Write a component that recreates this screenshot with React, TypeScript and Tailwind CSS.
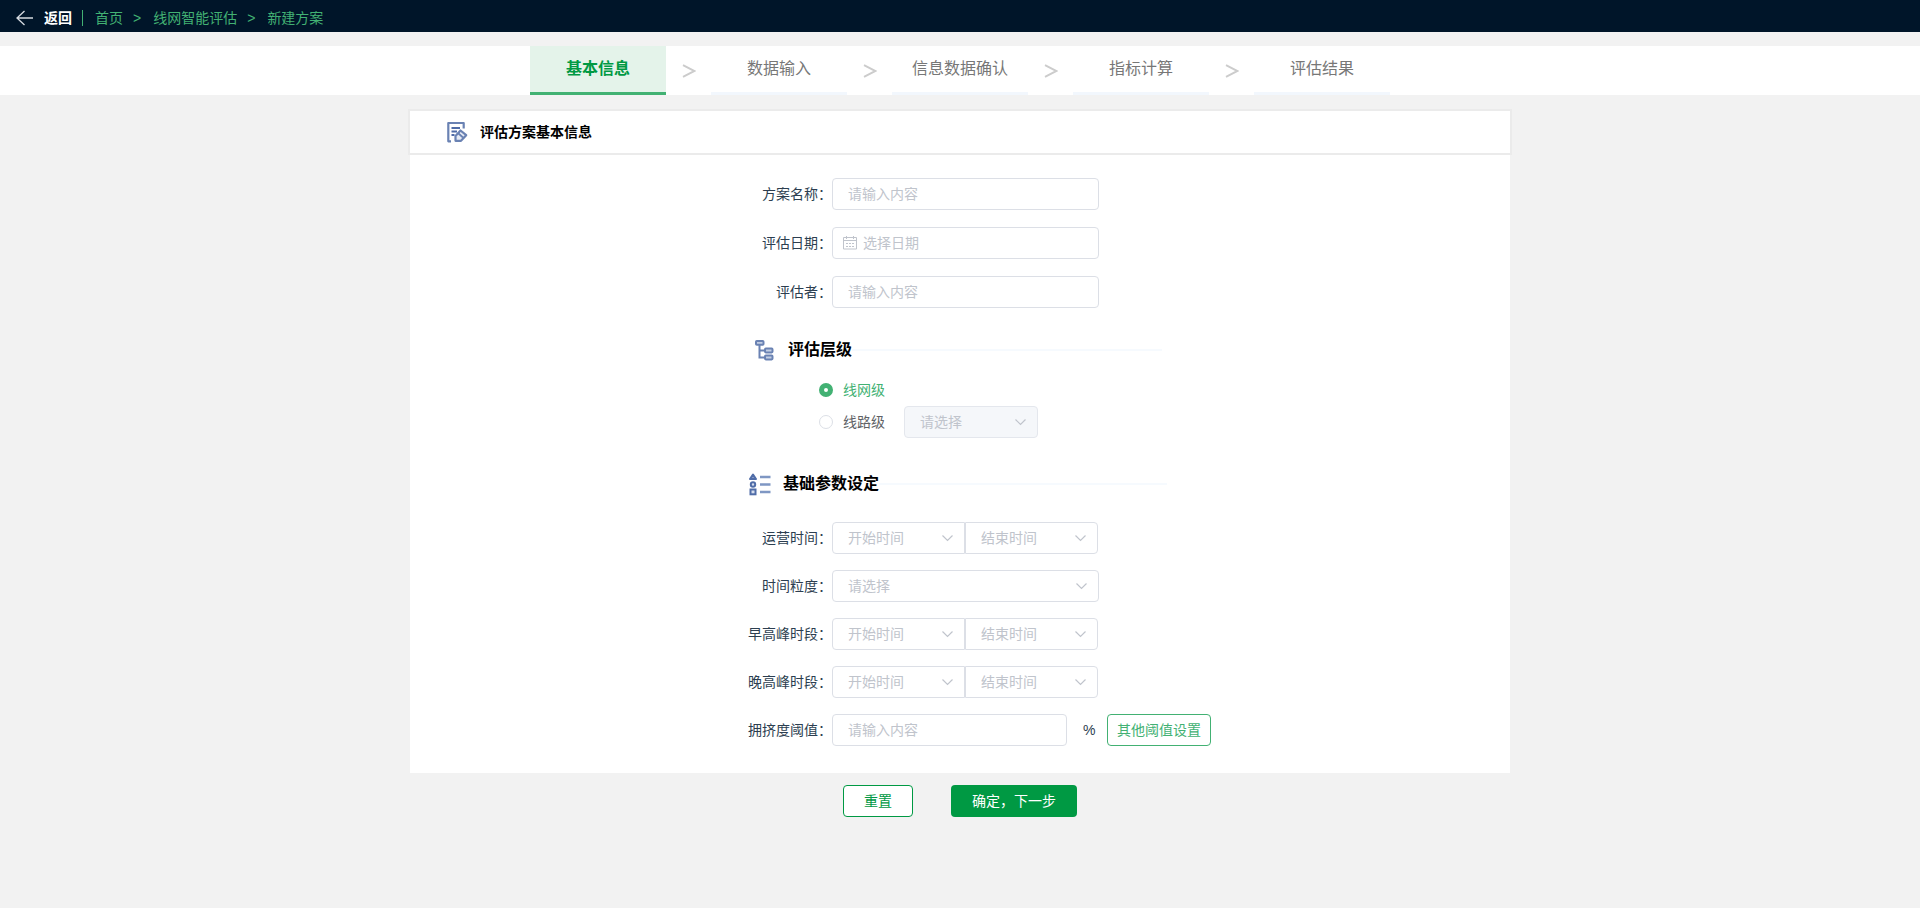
import { useState } from 'react';
import type { ReactNode } from 'react';

const STEPS = ['基本信息', '数据输入', '信息数据确认', '指标计算', '评估结果'];

const FIELD =
  'h-8 rounded border border-[#dcdfe6] bg-white text-sm text-[#606266] outline-none placeholder:text-[#c0c4cc] focus:border-[#42b173]';

function BackArrow() {
  return (
    <svg width="18" height="16" viewBox="0 0 18 16" fill="none" stroke="#d5dae0" strokeWidth="1.3" aria-hidden="true">
      <path d="M17 8H1M8.500 1L1 8l7.500 7" />
    </svg>
  );
}

function StepArrow() {
  return (
    <svg width="14" height="14" viewBox="0 0 14 14" fill="none" stroke="#cccccc" strokeWidth="2" aria-hidden="true">
      <path d="M1 1.200l11.500 5.800L1 12.800" />
    </svg>
  );
}

function EditFormIcon() {
  return (
    <svg width="22" height="22" viewBox="0 0 22 22" fill="none" stroke="#6a82b3" strokeWidth="2.200" aria-hidden="true">
      <path d="M5 20.300H2.300V2H17.700V7.500" strokeLinejoin="round" />
      <path d="M5.500 7H14M5.500 10.500H11M5.500 14H8.500" stroke="#4f6ba6" strokeWidth="2" />
      <path d="M14.500 9.500l5.700 4.700-5.200 5.600H9.500V15z" fill="#e6ebf5" strokeLinejoin="round" />
      <path d="M12.500 12.500l4.500 4" strokeWidth="1.800" />
    </svg>
  );
}

function TreeIcon() {
  return (
    <svg width="20" height="22" viewBox="0 0 20 22" fill="none" stroke="#6a82b3" strokeWidth="2" aria-hidden="true">
      <path d="M5.500 6v12.500h5.500M5.500 11.500h5.500" />
      <rect x="2" y="2" width="7.500" height="3.800" rx="0.800" fill="#c3cee3" />
      <rect x="11" y="9.600" width="7.500" height="3.800" rx="0.800" fill="#c3cee3" />
      <rect x="11" y="16.600" width="7.500" height="3.800" rx="0.800" fill="#c3cee3" />
    </svg>
  );
}

function ListIcon() {
  return (
    <svg width="24" height="24" viewBox="0 0 24 24" fill="none" stroke="#506da8" strokeWidth="2" aria-hidden="true">
      <path d="M5 2.500L8 7H2z" fill="#8da0c8" strokeLinejoin="round" />
      <circle cx="5" cy="12.500" r="2.200" fill="#d5dded" />
      <rect x="2.500" y="17.500" width="5" height="4.800" fill="#d5dded" />
      <path d="M12 5h10.500M12 12.500h10.500M12 20h10.500" strokeWidth="2.600" stroke="#7f97c3" />
    </svg>
  );
}

function CalendarIcon() {
  return (
    <svg width="14" height="14" viewBox="0 0 14 14" fill="none" stroke="#c0c4cc" aria-hidden="true">
      <path d="M0.500 1.500h13v11.500h-13zM0.500 4.500h13M3.500 0v3M10.500 0v3M3 7.500h2M6 7.500h2M9 7.500h2M3 10.500h2M6 10.500h2M9 10.500h2" />
    </svg>
  );
}

type SelectProps = { id?: string; label: string; placeholder: string; className: string; disabled?: boolean };

function Select({ id, label, placeholder, className, disabled }: SelectProps) {
  return (
    <div className={`relative ${className}`}>
      <select
        id={id}
        aria-label={label}
        disabled={disabled}
        className="h-8 w-full appearance-none rounded-[inherit] border border-[#dcdfe6] bg-white pr-8 pl-[15px] text-sm text-[#c0c4cc] outline-none focus:border-[#42b173] disabled:border-[#e4e7ed] disabled:bg-[#f5f7fa] disabled:opacity-100"
      >
        <option>{placeholder}</option>
      </select>
      <svg
        className="pointer-events-none absolute top-3 right-3"
        width="11"
        height="8"
        viewBox="0 0 11 8"
        fill="none"
        stroke="#c0c4cc"
        strokeWidth="1.200"
        aria-hidden="true"
      >
        <path d="M0.500 1.500l5 5 5-5" />
      </svg>
    </div>
  );
}

function Row({ label, htmlFor, children }: { label: string; htmlFor: string; children: ReactNode }) {
  return (
    <div className="flex items-center">
      <label htmlFor={htmlFor} className="w-[84px] shrink-0 text-right text-sm text-[#2c3e50]">
        {label}
      </label>
      {children}
    </div>
  );
}

function TimeRange({ id, label }: { id: string; label: string }) {
  return (
    <Row label={label} htmlFor={id}>
      <Select id={id} label={`${label}开始时间`} placeholder="开始时间" className="w-[133px] rounded-l" />
      <Select label={`${label}结束时间`} placeholder="结束时间" className="w-[133px] rounded-r" />
    </Row>
  );
}

export default function App() {
  const [level, setLevel] = useState('network');
  const radio =
    'size-3.5 appearance-none rounded-full border border-[#dcdfe6] bg-white checked:border-5 checked:border-[#42b173]';

  return (
    <div className="min-h-screen bg-[#f2f2f2] font-['Liberation_Sans','Noto_Sans_CJK_SC',sans-serif] text-sm">
      <header className="flex h-8 items-center bg-[#001529] pt-1 pl-4 leading-7 text-[#42b173]">
        <button type="button" className="flex items-center gap-2.5 font-bold text-white">
          <BackArrow />
          返回
        </button>
        <span className="ml-2.5 h-4 w-px bg-[#42b173]" />
        <nav className="ml-3 flex items-center" aria-label="面包屑">
          <a href="#home">首页</a>
          <span className="mr-3 ml-2.5">&gt;</span>
          <a href="#evaluation">线网智能评估</a>
          <span className="mr-3 ml-2.5">&gt;</span>
          <a href="#new">新建方案</a>
        </nav>
      </header>

      <ol className="mt-3.5 flex justify-center bg-white">
        {STEPS.map((step, i) => (
          <li key={step} className="flex">
            {i > 0 && (
              <span className="flex w-[45px] items-center justify-center">
                <StepArrow />
              </span>
            )}
            <button
              type="button"
              className={
                i === 0
                  ? 'h-[49px] w-[136px] border-b-3 border-[#42b173] bg-[#e4f3ea] text-base font-bold text-[#009943]'
                  : 'h-[49px] w-[136px] border-b-3 border-[#f2f7fd] text-base text-[#777777]'
              }
            >
              {step}
            </button>
          </li>
        ))}
      </ol>

      <main className="mx-auto mt-3.5 max-w-[1104px]">
        <div className="flex h-[46px] items-center gap-3 border-2 border-[#ebebeb] bg-white pl-[36px]">
          <EditFormIcon />
          <h1 className="font-bold text-black">评估方案基本信息</h1>
        </div>

        <form id="plan" className="mx-0.5 flex justify-center bg-white pt-[23px] pb-[27px] pl-10">
          <div className="w-[464px]">
            <div className="flex flex-col gap-[17px]">
              <Row label="方案名称：" htmlFor="name">
                <input id="name" className={`${FIELD} w-[267px] px-[15px]`} placeholder="请输入内容" />
              </Row>
              <Row label="评估日期：" htmlFor="date">
                <div className="relative">
                  <input id="date" className={`${FIELD} w-[267px] pr-4 pl-[30px]`} placeholder="选择日期" />
                  <span className="pointer-events-none absolute top-[9px] left-[11px]">
                    <CalendarIcon />
                  </span>
                </div>
              </Row>
              <Row label="评估者：" htmlFor="author">
                <input id="author" className={`${FIELD} w-[267px] px-[15px]`} placeholder="请输入内容" />
              </Row>
            </div>

            <div className="mt-[30px] mr-[50px] ml-1.5 flex h-6 items-center">
              <TreeIcon />
              <h2 className="ml-3.5 text-base font-bold text-black">评估层级</h2>
              <span className="h-0.5 grow bg-[#f6fafe]" />
            </div>

            <div className="mt-3 ml-[71px] flex flex-col text-sm">
              <label className="flex h-8 items-center gap-2.5 text-[#606266] has-checked:text-[#42b173]">
                <input
                  type="radio"
                  name="level"
                  className={radio}
                  checked={level === 'network'}
                  onChange={() => setLevel('network')}
                />
                线网级
              </label>
              <div className="flex h-8 items-center gap-[19px]">
                <label className="flex items-center gap-2.5 text-[#606266] has-checked:text-[#42b173]">
                  <input
                    type="radio"
                    name="level"
                    className={radio}
                    checked={level === 'line'}
                    onChange={() => setLevel('line')}
                  />
                  线路级
                </label>
                <Select label="线路" placeholder="请选择" className="w-[134px] rounded" disabled={level !== 'line'} />
              </div>
            </div>

            <div className="mt-[34px] mr-[45px] flex h-6 items-center">
              <ListIcon />
              <h2 className="ml-[11px] text-base font-bold text-black">基础参数设定</h2>
              <span className="h-0.5 grow bg-[#f6fafe]" />
            </div>

            <div className="mt-[26px] flex flex-col gap-4">
              <TimeRange id="operation" label="运营时间：" />
              <Row label="时间粒度：" htmlFor="granularity">
                <Select id="granularity" label="时间粒度" placeholder="请选择" className="w-[267px] rounded" />
              </Row>
              <TimeRange id="morning" label="早高峰时段：" />
              <TimeRange id="evening" label="晚高峰时段：" />
              <Row label="拥挤度阈值：" htmlFor="threshold">
                <input id="threshold" className={`${FIELD} w-[235px] px-[15px]`} placeholder="请输入内容" />
                <span className="ml-4 w-6 text-[#2c3e50]">%</span>
                <button
                  type="button"
                  className="h-8 w-[104px] rounded border border-[#42b173] bg-white text-sm whitespace-nowrap text-[#42b173]"
                >
                  其他阈值设置
                </button>
              </Row>
            </div>
          </div>
        </form>

        <div className="mt-3 flex justify-center gap-[38px]">
          <button
            type="reset"
            form="plan"
            className="h-8 w-[70px] rounded border border-[#009943] bg-white text-sm text-[#009943]"
          >
            重置
          </button>
          <button type="submit" form="plan" className="h-8 w-[126px] rounded bg-[#009943] text-sm text-white">
            确定，下一步
          </button>
        </div>
      </main>
    </div>
  );
}
